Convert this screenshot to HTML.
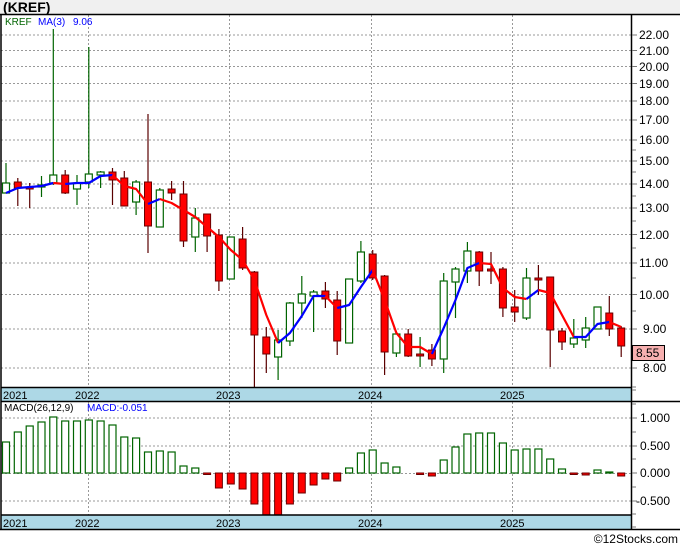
<!DOCTYPE html>
<html><head><meta charset="utf-8"><style>
html,body{margin:0;padding:0;background:#fff;}
body{width:680px;height:546px;overflow:hidden;position:relative;font-family:"Liberation Sans",sans-serif;}
svg{position:absolute;left:0;top:0;}
</style></head><body>
<svg width="680" height="546" viewBox="0 0 680 546" xmlns="http://www.w3.org/2000/svg" font-family="'Liberation Sans', sans-serif">
<defs>
<clipPath id="pc"><rect x="1" y="15" width="630" height="372"/></clipPath>
<clipPath id="mc"><rect x="1" y="402" width="630" height="113"/></clipPath>
</defs>
<rect x="0" y="0" width="680" height="14" fill="#f0f0f0"/>
<text x="3" y="12" font-size="14" font-weight="bold" fill="#000">(KREF)</text>
<rect x="0" y="14" width="680" height="516" fill="#fff"/>
<!-- price grid -->
<g stroke="#999" stroke-width="1" stroke-dasharray="2,2">
<line x1="1" y1="368" x2="631" y2="368"/><line x1="1" y1="329" x2="631" y2="329"/><line x1="1" y1="294.5" x2="631" y2="294.5"/><line x1="1" y1="263" x2="631" y2="263"/><line x1="1" y1="234.5" x2="631" y2="234.5"/><line x1="1" y1="208" x2="631" y2="208"/><line x1="1" y1="184" x2="631" y2="184"/><line x1="1" y1="161" x2="631" y2="161"/><line x1="1" y1="140" x2="631" y2="140"/><line x1="1" y1="120" x2="631" y2="120"/><line x1="1" y1="101" x2="631" y2="101"/><line x1="1" y1="83.5" x2="631" y2="83.5"/><line x1="1" y1="66.5" x2="631" y2="66.5"/><line x1="1" y1="50.5" x2="631" y2="50.5"/><line x1="1" y1="35" x2="631" y2="35"/>
<line x1="88.5" y1="15" x2="88.5" y2="387"/><line x1="229.5" y1="15" x2="229.5" y2="387"/><line x1="371.5" y1="15" x2="371.5" y2="387"/><line x1="512.5" y1="15" x2="512.5" y2="387"/>
<line x1="1" y1="418" x2="631" y2="418"/><line x1="1" y1="446" x2="631" y2="446"/><line x1="1" y1="473.5" x2="631" y2="473.5"/><line x1="1" y1="501" x2="631" y2="501"/>
<line x1="88.5" y1="402" x2="88.5" y2="515"/><line x1="229.5" y1="402" x2="229.5" y2="515"/><line x1="371.5" y1="402" x2="371.5" y2="515"/><line x1="512.5" y1="402" x2="512.5" y2="515"/>
</g>
<g clip-path="url(#pc)">
<!-- wicks -->
<g stroke-width="1.2">
<g stroke="#006400">
<line x1="6" y1="163" x2="6" y2="193"/><line x1="41.5" y1="176" x2="41.5" y2="197"/><line x1="53.3" y1="29" x2="53.3" y2="185"/><line x1="77" y1="175" x2="77" y2="205"/><line x1="88.8" y1="47" x2="88.8" y2="188"/><line x1="100.6" y1="171" x2="100.6" y2="188"/><line x1="136.1" y1="180" x2="136.1" y2="215"/><line x1="159.8" y1="188" x2="159.8" y2="227"/><line x1="195.3" y1="208" x2="195.3" y2="252"/><line x1="230.8" y1="237" x2="230.8" y2="279"/><line x1="278.1" y1="330" x2="278.1" y2="380"/><line x1="289.9" y1="302" x2="289.9" y2="346"/><line x1="301.8" y1="276" x2="301.8" y2="318"/><line x1="313.6" y1="290" x2="313.6" y2="332"/><line x1="349.1" y1="279" x2="349.1" y2="343"/><line x1="360.9" y1="241" x2="360.9" y2="283"/><line x1="396.4" y1="331" x2="396.4" y2="357"/><line x1="420.1" y1="337" x2="420.1" y2="367"/><line x1="443.7" y1="273" x2="443.7" y2="373"/><line x1="455.5" y1="267" x2="455.5" y2="318"/><line x1="467.4" y1="242" x2="467.4" y2="283"/><line x1="526.5" y1="268" x2="526.5" y2="320"/><line x1="573.8" y1="319" x2="573.8" y2="348"/><line x1="585.7" y1="317" x2="585.7" y2="348"/><line x1="597.5" y1="307" x2="597.5" y2="329"/>
</g>
<g stroke="#5a0000">
<line x1="17.8" y1="178" x2="17.8" y2="206"/><line x1="29.7" y1="183" x2="29.7" y2="208"/><line x1="65.2" y1="170" x2="65.2" y2="194"/><line x1="112.5" y1="168" x2="112.5" y2="205"/><line x1="124.3" y1="171" x2="124.3" y2="206"/><line x1="148" y1="114" x2="148" y2="253"/><line x1="171.6" y1="181" x2="171.6" y2="200"/><line x1="183.5" y1="181" x2="183.5" y2="247"/><line x1="207.1" y1="214" x2="207.1" y2="252"/><line x1="218.9" y1="229" x2="218.9" y2="291"/><line x1="242.6" y1="227" x2="242.6" y2="270"/><line x1="254.4" y1="271" x2="254.4" y2="390"/><line x1="266.3" y1="327" x2="266.3" y2="373"/><line x1="325.4" y1="282" x2="325.4" y2="308"/><line x1="337.2" y1="291" x2="337.2" y2="355"/><line x1="372.7" y1="250" x2="372.7" y2="280"/><line x1="384.6" y1="275" x2="384.6" y2="375"/><line x1="408.2" y1="329" x2="408.2" y2="357"/><line x1="431.9" y1="344" x2="431.9" y2="366"/><line x1="479.2" y1="251" x2="479.2" y2="286"/><line x1="491" y1="252" x2="491" y2="284"/><line x1="502.9" y1="267" x2="502.9" y2="317"/><line x1="514.7" y1="290" x2="514.7" y2="322"/><line x1="538.4" y1="265" x2="538.4" y2="295"/><line x1="550.2" y1="277" x2="550.2" y2="367"/><line x1="562" y1="328" x2="562" y2="350"/><line x1="609.3" y1="296" x2="609.3" y2="336"/><line x1="621.2" y1="326" x2="621.2" y2="357"/>
</g>
</g>
<!-- green bodies -->
<g fill="#fff" stroke="#006400" stroke-width="1.2">
<rect x="2.5" y="183" width="7" height="10"/><rect x="38" y="185" width="7" height="2"/><rect x="49.8" y="175" width="7" height="8"/><rect x="73.5" y="183" width="7" height="6"/><rect x="85.3" y="174" width="7" height="8"/><rect x="97.1" y="172" width="7" height="3"/><rect x="132.6" y="182" width="7" height="20"/><rect x="156.3" y="190" width="7" height="37"/><rect x="191.8" y="218" width="7" height="19"/><rect x="227.3" y="237" width="7" height="42"/><rect x="274.6" y="340" width="7" height="17"/><rect x="286.4" y="303" width="7" height="38"/><rect x="298.3" y="294" width="7" height="9"/><rect x="310.1" y="292" width="7" height="4"/><rect x="345.6" y="279" width="7" height="64"/><rect x="357.4" y="252" width="7" height="29"/><rect x="392.9" y="334" width="7" height="19"/><rect x="440.2" y="281" width="7" height="78"/><rect x="452" y="269" width="7" height="13"/><rect x="463.9" y="251" width="7" height="20"/><rect x="523" y="278" width="7" height="40"/><rect x="570.3" y="338" width="7" height="6"/><rect x="582.2" y="328" width="7" height="12"/><rect x="594" y="307" width="7" height="22"/>
</g>
<!-- red bodies -->
<g fill="#ff0000" stroke="#6a0000" stroke-width="1">
<rect x="14.3" y="182" width="7" height="6"/><rect x="26.2" y="187" width="7" height="2"/><rect x="61.7" y="175" width="7" height="18"/><rect x="109" y="172" width="7" height="8"/><rect x="120.8" y="178" width="7" height="28"/><rect x="144.5" y="182" width="7" height="44"/><rect x="168.1" y="189" width="7" height="4"/><rect x="180" y="194" width="7" height="47"/><rect x="203.6" y="214" width="7" height="22"/><rect x="215.4" y="235" width="7" height="46"/><rect x="239.1" y="239" width="7" height="29"/><rect x="250.9" y="272" width="7" height="63"/><rect x="262.8" y="337" width="7" height="17"/><rect x="321.9" y="291" width="7" height="8"/><rect x="333.7" y="300" width="7" height="41"/><rect x="369.2" y="254" width="7" height="24"/><rect x="381.1" y="276" width="7" height="76"/><rect x="404.7" y="334" width="7" height="22"/><rect x="416.6" y="354" width="7" height="2"/><rect x="428.4" y="350" width="7" height="9"/><rect x="475.7" y="252" width="7" height="19"/><rect x="487.5" y="269" width="7" height="2"/><rect x="499.4" y="269" width="7" height="39"/><rect x="511.2" y="307" width="7" height="5"/><rect x="534.9" y="278" width="7" height="2"/><rect x="546.7" y="277" width="7" height="53"/><rect x="558.5" y="331" width="7" height="11"/><rect x="605.8" y="313" width="7" height="16"/><rect x="617.7" y="328" width="7" height="18"/>
</g>
<!-- MA -->
<g fill="none" stroke-width="2.2" stroke-linejoin="round">
<polyline stroke="#0000ff" points="6,193 17.8,188 30,187 41.5,186 53.3,183"/>
<polyline stroke="#ff0000" points="53.3,183 65.2,184"/>
<polyline stroke="#0000ff" points="65.2,184 77,183 88.8,183 100.6,176 112.5,175"/>
<polyline stroke="#ff0000" points="112.5,175 124.3,186 136.1,189 148,204"/>
<polyline stroke="#0000ff" points="148,204 159.8,199"/>
<polyline stroke="#ff0000" points="159.8,199 171.6,203 183.5,210 195.3,217 207.1,227 218.9,237 230.8,250 242.6,260 254.4,280 266.3,315 278.1,343"/>
<polyline stroke="#0000ff" points="278.1,343 289.9,333 301.8,316 313.6,296 325.4,296"/>
<polyline stroke="#ff0000" points="325.4,296 337.2,308"/>
<polyline stroke="#0000ff" points="337.2,308 349.1,305 360.9,287 372.7,270"/>
<polyline stroke="#ff0000" points="372.7,270 384.6,300 396.4,333 408.2,347 420.1,347 431.9,354"/>
<polyline stroke="#0000ff" points="431.9,354 443.7,328 455.5,300 467.4,268 479.2,263"/>
<polyline stroke="#ff0000" points="479.2,263 491,264 502.9,288 514.7,297 526.5,299"/>
<polyline stroke="#0000ff" points="526.5,299 538.4,290"/>
<polyline stroke="#ff0000" points="538.4,290 550.2,293 562,315 573.8,337"/>
<polyline stroke="#0000ff" points="573.8,337 585.7,337 597.5,324 609.3,322"/>
<polyline stroke="#ff0000" points="609.3,322 621.2,327"/>
</g>
</g>
<text x="5" y="25" font-size="10" fill="#006400">KREF</text>
<text x="38" y="25" font-size="10" fill="#0000ff">MA(3)</text>
<text x="73" y="25" font-size="10" fill="#0000ff">9.06</text>
<!-- date strips -->
<rect x="1" y="388" width="630" height="13" fill="#add8e6"/>
<rect x="1" y="515" width="630" height="14" fill="#add8e6"/>
<g font-size="11" fill="#000">
<text x="3" y="399">2021</text><text x="75" y="399">2022</text><text x="216" y="399">2023</text><text x="358" y="399">2024</text><text x="500" y="399">2025</text>
<text x="3" y="527">2021</text><text x="75" y="527">2022</text><text x="216" y="527">2023</text><text x="358" y="527">2024</text><text x="500" y="527">2025</text>
</g>
<!-- MACD bars -->
<g clip-path="url(#mc)">
<g fill="#fff" stroke="#006400" stroke-width="1.2">
<rect x="2.5" y="442" width="7" height="31"/><rect x="14.3" y="432" width="7" height="41"/><rect x="26.2" y="426" width="7" height="47"/><rect x="38" y="422" width="7" height="51"/><rect x="49.8" y="417" width="7" height="56"/><rect x="61.7" y="421" width="7" height="52"/><rect x="73.5" y="421" width="7" height="52"/><rect x="85.3" y="420" width="7" height="53"/><rect x="97.1" y="421" width="7" height="52"/><rect x="109" y="425" width="7" height="48"/><rect x="120.8" y="437" width="7" height="36"/><rect x="132.6" y="438" width="7" height="35"/><rect x="144.5" y="452" width="7" height="21"/><rect x="156.3" y="451" width="7" height="22"/><rect x="168.1" y="452" width="7" height="21"/><rect x="180" y="466" width="7" height="7"/><rect x="191.8" y="468" width="7" height="5"/><rect x="345.6" y="468" width="7" height="5"/><rect x="357.4" y="453" width="7" height="20"/><rect x="369.2" y="450" width="7" height="23"/><rect x="381.1" y="463" width="7" height="10"/><rect x="392.9" y="467" width="7" height="6"/><rect x="440.2" y="460" width="7" height="13"/><rect x="452" y="447" width="7" height="26"/><rect x="463.9" y="434" width="7" height="39"/><rect x="475.7" y="433" width="7" height="40"/><rect x="487.5" y="433" width="7" height="40"/><rect x="499.4" y="443" width="7" height="30"/><rect x="511.2" y="450" width="7" height="23"/><rect x="523" y="449" width="7" height="24"/><rect x="534.9" y="449" width="7" height="24"/><rect x="546.7" y="459" width="7" height="14"/><rect x="558.5" y="469" width="7" height="4"/><rect x="594" y="470" width="7" height="3"/><rect x="605.8" y="472" width="7" height="1"/>
</g>
<g fill="#ff0000" stroke="#6a0000" stroke-width="1">
<rect x="203.6" y="473" width="7" height="1.5"/><rect x="215.4" y="473" width="7" height="15"/><rect x="227.3" y="473" width="7" height="11"/><rect x="239.1" y="473" width="7" height="16"/><rect x="250.9" y="473" width="7" height="31"/><rect x="262.8" y="473" width="7" height="43"/><rect x="274.6" y="473" width="7" height="43"/><rect x="286.4" y="473" width="7" height="31"/><rect x="298.3" y="473" width="7" height="20"/><rect x="310.1" y="473" width="7" height="12"/><rect x="321.9" y="473" width="7" height="6"/><rect x="333.7" y="473" width="7" height="8"/><rect x="416.6" y="473" width="7" height="1.5"/><rect x="428.4" y="473" width="7" height="3"/><rect x="570.3" y="473" width="7" height="1.5"/><rect x="582.2" y="473" width="7" height="2"/><rect x="617.7" y="473" width="7" height="3"/>
</g>
</g>
<text x="4" y="411" font-size="10" fill="#000">MACD(26,12,9)</text>
<text x="87" y="411" font-size="10" fill="#0000ff">MACD:-0.051</text>
<!-- frames -->
<g stroke="#000" stroke-width="1.5" fill="none">
<line x1="0" y1="14.5" x2="680" y2="14.5"/>
<line x1="1" y1="14" x2="1" y2="530"/>
<line x1="631.5" y1="14" x2="631.5" y2="530"/>
<line x1="1" y1="387.5" x2="631" y2="387.5"/>
<line x1="1" y1="401.5" x2="680" y2="401.5"/>
<line x1="1" y1="515" x2="631" y2="515"/>
<line x1="0" y1="529.5" x2="680" y2="529.5"/>
</g>
<!-- axis ticks -->
<g stroke="#777" stroke-width="1">
<line x1="632" y1="368" x2="637" y2="368"/><line x1="632" y1="329" x2="637" y2="329"/><line x1="632" y1="294.5" x2="637" y2="294.5"/><line x1="632" y1="263" x2="637" y2="263"/><line x1="632" y1="234.5" x2="637" y2="234.5"/><line x1="632" y1="208" x2="637" y2="208"/><line x1="632" y1="184" x2="637" y2="184"/><line x1="632" y1="161" x2="637" y2="161"/><line x1="632" y1="140" x2="637" y2="140"/><line x1="632" y1="120" x2="637" y2="120"/><line x1="632" y1="101" x2="637" y2="101"/><line x1="632" y1="83.5" x2="637" y2="83.5"/><line x1="632" y1="66.5" x2="637" y2="66.5"/><line x1="632" y1="50.5" x2="637" y2="50.5"/><line x1="632" y1="35" x2="637" y2="35"/>
<line x1="632" y1="387" x2="636" y2="387"/><line x1="632" y1="348" x2="636" y2="348"/><line x1="632" y1="311" x2="636" y2="311"/><line x1="632" y1="278" x2="636" y2="278"/><line x1="632" y1="248" x2="636" y2="248"/><line x1="632" y1="221" x2="636" y2="221"/><line x1="632" y1="196" x2="636" y2="196"/><line x1="632" y1="172" x2="636" y2="172"/><line x1="632" y1="150" x2="636" y2="150"/>
<line x1="632" y1="390" x2="636" y2="390"/><line x1="632" y1="404" x2="636" y2="404"/><line x1="632" y1="418" x2="637" y2="418"/><line x1="632" y1="432" x2="636" y2="432"/><line x1="632" y1="446" x2="637" y2="446"/><line x1="632" y1="459" x2="636" y2="459"/><line x1="632" y1="473" x2="637" y2="473"/><line x1="632" y1="487" x2="636" y2="487"/><line x1="632" y1="501" x2="637" y2="501"/><line x1="632" y1="514" x2="636" y2="514"/><line x1="632" y1="527" x2="636" y2="527"/>
</g>
<g font-size="12" fill="#000">
<text x="639" y="39">22.00</text><text x="639" y="55">21.00</text><text x="639" y="71">20.00</text><text x="639" y="88">19.00</text><text x="639" y="105">18.00</text><text x="639" y="124">17.00</text><text x="639" y="144">16.00</text><text x="639" y="165">15.00</text><text x="639" y="188">14.00</text><text x="639" y="212">13.00</text><text x="639" y="239">12.00</text><text x="639" y="267">11.00</text><text x="639" y="299">10.00</text><text x="643" y="333">9.00</text><text x="643" y="372">8.00</text>
<text x="640" y="422">1.000</text><text x="640" y="450">0.500</text><text x="640" y="477">0.000</text><text x="636" y="505">-0.500</text>
</g>
<rect x="632.5" y="345.5" width="32" height="15" fill="#f7b0b0" stroke="#000" stroke-width="1"/>
<text x="636" y="357" font-size="12" fill="#000">8.55</text>
<text x="678" y="543" font-size="12" fill="#000" text-anchor="end">©12Stocks.com</text>
</svg>
</body></html>
